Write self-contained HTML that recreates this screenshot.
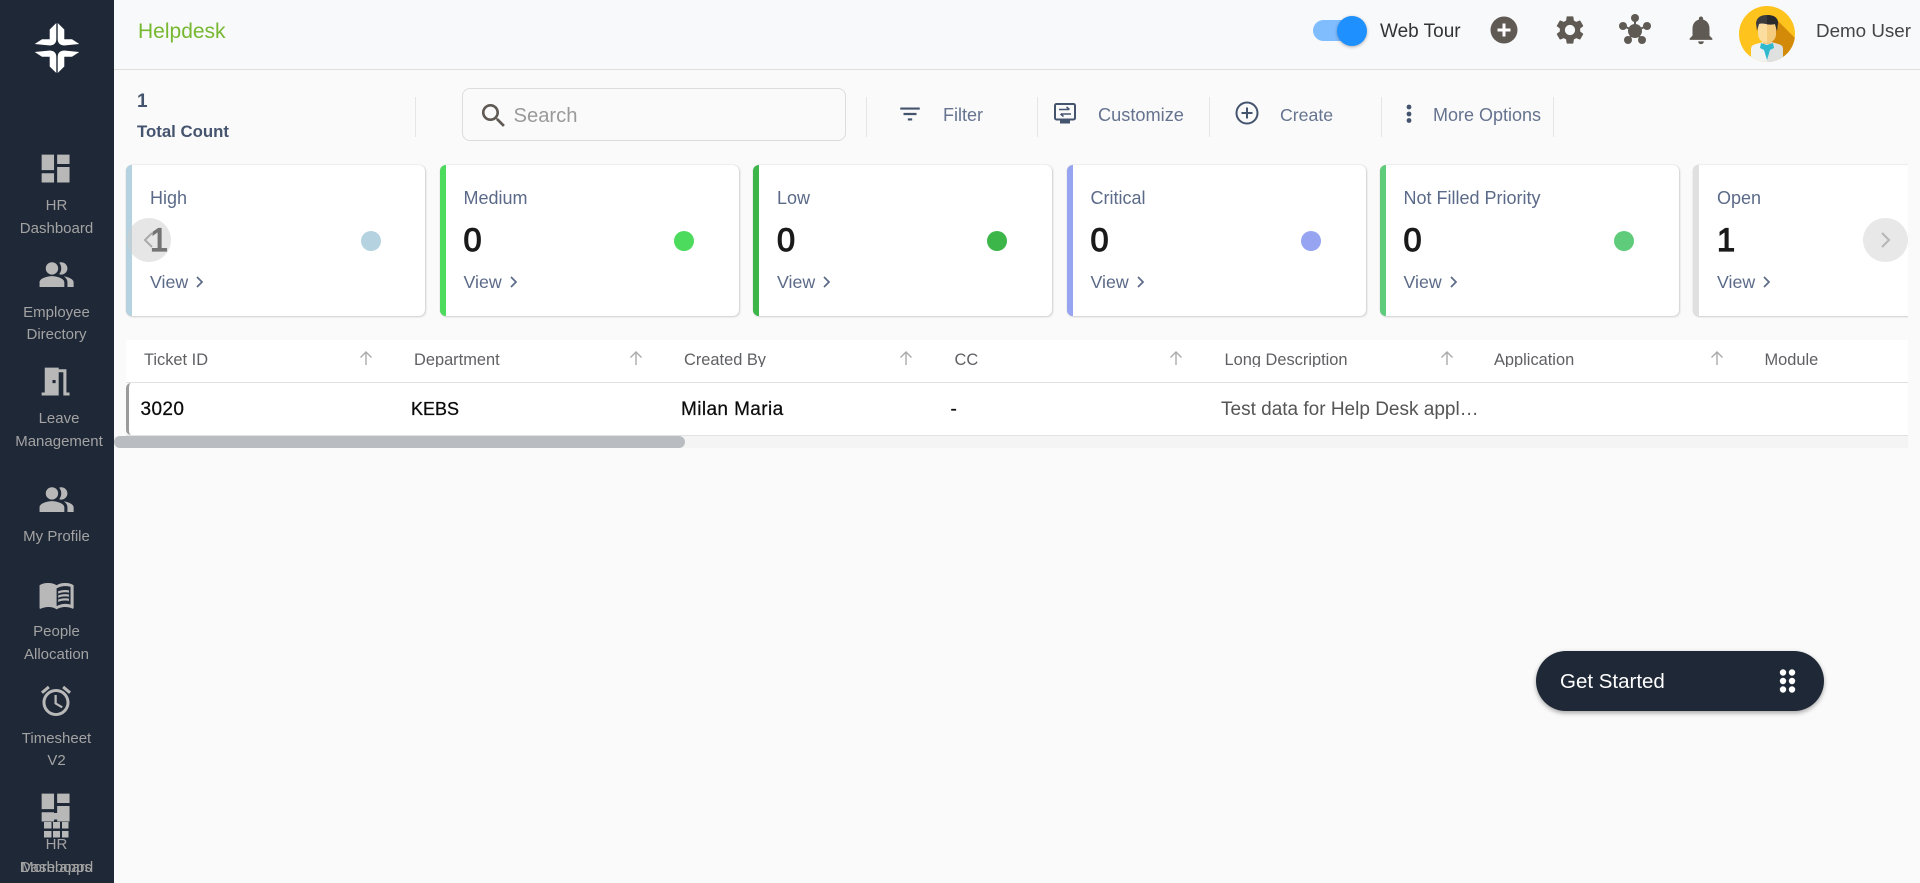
<!DOCTYPE html>
<html lang="en"><head><meta charset="utf-8"><title>Helpdesk</title>
<style>
html,body{margin:0;padding:0;width:1920px;height:883px;overflow:hidden;background:#fafafa;font-family:"Liberation Sans",sans-serif}
.a{position:absolute}
.t{position:absolute;line-height:0;white-space:nowrap}
.s{color:#a3a3a3;font-size:15px;transform:translateX(-50%)}
.tb{color:#65738f;font-size:18px;top:114.5px}
.dv{position:absolute;top:97px;width:1px;height:40px;background:#e6e6e6}
.card{position:absolute;top:9.5px;width:299px;height:151.5px;box-sizing:border-box;background:#fff;border-radius:6px;border-left:6px solid;box-shadow:0 0 1px rgba(0,0,0,.25),1px 1px 2px rgba(0,0,0,.14);overflow:hidden}
.card .l{position:absolute;left:18px;top:33.5px;line-height:0;font-size:18px;color:#5b6a88;white-space:nowrap}
.card .n{position:absolute;left:18px;top:75.5px;line-height:0;font-size:32.5px;color:#1a1a1a;-webkit-text-stroke:1.2px #1a1a1a}
.card .v{position:absolute;left:18px;top:117.5px;line-height:0;font-size:17.8px;color:#5b6a88}
.card svg{position:absolute;left:63px;top:110.5px}
.card i{position:absolute;left:228px;top:66.5px;width:20px;height:20px;border-radius:50%}
.h{position:absolute;top:340px;height:26.5px;overflow:hidden;font-size:16.4px;color:#5f6063;white-space:nowrap;line-height:40px}
.ar{position:absolute;top:350px}
.r{font-size:19px;color:#0b0b0b;top:409.5px;-webkit-text-stroke:.25px #0b0b0b;letter-spacing:.4px}
</style></head><body>

<!-- main header -->
<div class="a" style="left:114px;top:0;width:1806px;height:69px;background:#f8f9fb;border-bottom:1px solid #dedede"></div>
<div class="t" style="left:138px;top:32px;font-size:21px;color:#76b82f">Helpdesk</div>

<div class="a" style="left:1313px;top:20px;width:42px;height:21px;border-radius:11px;background:#80bdff"></div>
<div class="a" style="left:1337px;top:16px;width:30px;height:30px;border-radius:50%;background:#1e90ff;box-shadow:0 1px 3px rgba(0,0,0,.3)"></div>
<div class="t" style="left:1380px;top:31.500px;font-size:19px;color:#333">Web Tour</div>

<svg class="a" style="left:1489.500px;top:16px" width="28" height="28" viewBox="0 0 28 28"><circle cx="14" cy="14" r="13.500" fill="#5f5a54"/><path d="M14 7.500v13M7.500 14h13" stroke="#fff" stroke-width="3"/></svg>
<svg class="a" style="left:1553px;top:13px" width="34" height="34" viewBox="0 0 24 24"><path fill="#5f5a54" d="M19.140 12.940c.04-.3.06-.61.06-.94 0-.32-.02-.64-.07-.94l2.030-1.580c.18-.14.23-.41.12-.61l-1.920-3.320c-.12-.22-.37-.29-.59-.22l-2.390.96c-.5-.38-1.030-.7-1.620-.94l-.36-2.540c-.04-.24-.24-.41-.48-.41h-3.840c-.24 0-.43.17-.47.41l-.36 2.540c-.59.24-1.130.57-1.620.94l-2.390-.96c-.22-.08-.47 0-.59.22L2.740 8.870c-.12.21-.08.47.12.61l2.030 1.580c-.05.3-.09.63-.09.94s.02.64.07.94l-2.030 1.580c-.18.14-.23.41-.12.61l1.920 3.320c.12.22.37.29.59.22l2.390-.96c.5.38 1.030.7 1.620.94l.36 2.540c.05.24.24.41.48.41h3.840c.24 0 .44-.17.47-.41l.36-2.540c.59-.24 1.130-.56 1.620-.94l2.390.96c.22.08.47 0 .59-.22l1.920-3.320c.12-.22.07-.47-.12-.61l-2.010-1.580zM12 15.600c-1.980 0-3.600-1.620-3.600-3.600s1.620-3.600 3.600-3.600 3.600 1.620 3.600 3.600-1.620 3.600-3.600 3.600z"/></svg>
<svg class="a" style="left:1617px;top:12px" width="36" height="36" viewBox="0 0 36 36" fill="#5f5a54" stroke="#5f5a54"><path d="M18 19V6M18 19L6 14M18 19l12-5M18 19l-7 9M18 19l7 9" stroke-width="2"/><circle cx="18" cy="19" r="7" stroke="none"/><circle cx="18" cy="6" r="4" stroke="none"/><circle cx="6" cy="14" r="4" stroke="none"/><circle cx="30" cy="14" r="4" stroke="none"/><circle cx="11" cy="28" r="4" stroke="none"/><circle cx="25" cy="28" r="4" stroke="none"/></svg>
<svg class="a" style="left:1684px;top:13px" width="34" height="34" viewBox="0 0 24 24"><path fill="#5f5a54" d="M12 22c1.100 0 2-.9 2-2h-4c0 1.100.89 2 2 2zm6-6v-5c0-3.070-1.640-5.640-4.500-6.320V4c0-.83-.67-1.500-1.500-1.500s-1.500.67-1.500 1.500v.68C7.630 5.360 6 7.920 6 11v5l-2 2v1h16v-1l-2-2z"/></svg>

<svg class="a" style="left:1739px;top:6px" width="56" height="56" viewBox="0 0 56 56">
<defs><clipPath id="c"><circle cx="28" cy="28" r="28"/></clipPath></defs>
<g clip-path="url(#c)"><rect width="56" height="56" fill="#fec31d"/>
<path d="M37 13L60 36V60H30V30z" fill="#d38a08"/>
<path d="M12 56V43q0-4 5-5l7-2h8l7 2q5 1 5 5v13z" fill="#f1f2f2"/><path d="M28 36h4l7 2q5 1 5 5v13H28z" fill="#dfe1e1"/>
<rect x="24" y="30" width="8" height="8" fill="#f1c27d"/>
<path d="M22 37l6 2 6-2 1 5-4 2 -3 10-3-10-4-2z" fill="#2fb9cf"/>
<path d="M19 17h18v10q0 9-9 10-9-1-9-10z" fill="#fbdda0"/><path d="M28 17h9v10q0 9-9 10z" fill="#f5cb7e"/>
<path d="M18 25l-1-8q1-8 11-8 10 0 11 7l-1 9-2-7q-4 1-9 0t-7 0z" fill="#3c3c3e"/><path d="M28 9q10 0 11 7l-1 9-2-7q-4 1-8 .4z" fill="#2a2a2c"/>
</g></svg>
<div class="t" style="left:1816px;top:31px;font-size:18.800px;color:#444">Demo User</div>

<!-- toolbar -->
<div class="t" style="left:137px;top:102px;font-size:19px;font-weight:700;color:#45546e">1</div>
<div class="t" style="left:137px;top:132px;font-size:16.800px;font-weight:700;color:#45546e">Total Count</div>
<div class="dv" style="left:414.500px"></div>
<div class="a" style="left:462px;top:88px;width:384px;height:53px;box-sizing:border-box;border:1px solid #dcdcdc;border-radius:8px"></div>
<svg class="a" style="left:478px;top:100px" width="31.500" height="31.500" viewBox="0 0 24 24"><path fill="#5f5a54" d="M15.500 14h-.79l-.28-.27C15.410 12.590 16 11.110 16 9.500 16 5.910 13.090 3 9.500 3S3 5.910 3 9.500 5.910 16 9.500 16c1.610 0 3.090-.59 4.230-1.570l.27.28v.79l5 4.990L20.490 19l-4.990-5zm-6 0C7.010 14 5 11.990 5 9.500S7.010 5 9.500 5 14 7.010 14 9.500 11.990 14 9.500 14z"/></svg>
<div class="t" style="left:513.500px;top:115.500px;font-size:20.200px;color:#9a9a9a">Search</div>
<div class="dv" style="left:866px"></div>

<svg class="a" style="left:897px;top:101px" width="26" height="26" viewBox="0 0 24 24"><path fill="#45546e" d="M10 18h4v-2h-4v2zM3 6v2h18V6H3zm3 7h12v-2H6v2z"/></svg>
<div class="t tb" style="left:943px">Filter</div>
<div class="dv" style="left:1037px"></div>
<svg class="a" style="left:1054px;top:103px" width="22" height="21" viewBox="0 0 22 21"><rect x="1" y="1" width="20" height="15.500" rx="1.500" fill="none" stroke="#45546e" stroke-width="2"/><rect x="6" y="16.500" width="10" height="4" fill="#45546e"/><path d="M5 6.500h10M12.500 4l3 2.500M17 11H7M9.500 13.500l-3-2.500" stroke="#45546e" stroke-width="1.500" fill="none"/></svg>
<div class="t tb" style="left:1098px;font-size:18.200px">Customize</div>
<div class="dv" style="left:1209px"></div>
<svg class="a" style="left:1235px;top:101px" width="24" height="24" viewBox="0 0 24 24"><circle cx="12" cy="12" r="10.500" fill="none" stroke="#45546e" stroke-width="2"/><path d="M12 6.500v11M6.500 12h11" stroke="#45546e" stroke-width="2"/></svg>
<div class="t tb" style="left:1280px;font-size:17.700px">Create</div>
<div class="dv" style="left:1381px"></div>
<svg class="a" style="left:1405px;top:103px" width="8" height="22" viewBox="0 0 8 22" fill="#45546e"><circle cx="4" cy="4" r="2.400"/><circle cx="4" cy="11" r="2.400"/><circle cx="4" cy="17.500" r="2.400"/></svg>
<div class="t tb" style="left:1433px">More Options</div>
<div class="dv" style="left:1553px"></div>

<!-- cards -->
<div class="a" style="left:120px;top:155px;width:1788px;height:170px;overflow:hidden">
<div class="card" style="left:6px;border-color:#b5d2e0"><div class="l">High</div><div class="n">1</div><div class="v">View</div><svg width="10" height="14" viewBox="0 0 10 14"><path d="M2 2l5 5-5 5" fill="none" stroke="#5b6a88" stroke-width="1.700"/></svg><i style="background:#b5d2e0;left:228.500px"></i></div>
<div class="card" style="left:319.500px;border-color:#4cdb5d"><div class="l">Medium</div><div class="n">0</div><div class="v">View</div><svg width="10" height="14" viewBox="0 0 10 14"><path d="M2 2l5 5-5 5" fill="none" stroke="#5b6a88" stroke-width="1.700"/></svg><i style="background:#4cdb5d"></i></div>
<div class="card" style="left:633px;border-color:#3cb549"><div class="l">Low</div><div class="n">0</div><div class="v">View</div><svg width="10" height="14" viewBox="0 0 10 14"><path d="M2 2l5 5-5 5" fill="none" stroke="#5b6a88" stroke-width="1.700"/></svg><i style="background:#3cb549"></i></div>
<div class="card" style="left:946.500px;border-color:#97a4f1"><div class="l">Critical</div><div class="n">0</div><div class="v">View</div><svg width="10" height="14" viewBox="0 0 10 14"><path d="M2 2l5 5-5 5" fill="none" stroke="#5b6a88" stroke-width="1.700"/></svg><i style="background:#97a4f1"></i></div>
<div class="card" style="left:1259.500px;border-color:#5fcc7b"><div class="l">Not Filled Priority</div><div class="n">0</div><div class="v">View</div><svg width="10" height="14" viewBox="0 0 10 14"><path d="M2 2l5 5-5 5" fill="none" stroke="#5b6a88" stroke-width="1.700"/></svg><i style="background:#5fcc7b"></i></div>
<div class="card" style="left:1573px;border-color:#e0e0e0"><div class="l">Open</div><div class="n">1</div><div class="v">View</div><svg width="10" height="14" viewBox="0 0 10 14"><path d="M2 2l5 5-5 5" fill="none" stroke="#5b6a88" stroke-width="1.700"/></svg></div>
</div>
<div class="a" style="left:126.500px;top:218px;width:44px;height:44px;border-radius:50%;background:rgba(205,205,205,.5)"></div>
<svg class="a" style="left:142px;top:231px" width="12" height="18" viewBox="0 0 12 18"><path d="M10 2L3 9l7 7" fill="none" stroke="#aaa" stroke-width="2"/></svg>
<div class="a" style="left:1863px;top:218px;width:45px;height:44px;border-radius:50%;background:#e8e8e8"></div>
<svg class="a" style="left:1880px;top:231px" width="12" height="18" viewBox="0 0 12 18"><path d="M2 2l7 7-7 7" fill="none" stroke="#b5b5b5" stroke-width="2"/></svg>

<!-- table -->
<div class="a" style="left:126px;top:340px;width:1782px;height:42px;background:#fff;border-bottom:1px solid #e0e0e0"></div>
<div class="a" style="left:126px;top:383px;width:1782px;height:52px;box-sizing:border-box;background:#fff;border-left:3.500px solid #9a9a9a;border-radius:5px 0 0 5px"></div>
<div class="a" style="left:126px;top:435px;width:1782px;height:1px;background:#e2e2e2"></div>
<div class="h" style="left:144px">Ticket ID</div>
<div class="h" style="left:414px">Department</div>
<div class="h" style="left:684px">Created By</div>
<div class="h" style="left:954.500px">CC</div>
<div class="h" style="left:1224.500px">Long Description</div>
<div class="h" style="left:1494px">Application</div>
<div class="h" style="left:1764.500px">Module</div>
<svg class="ar" style="left:359px" width="14" height="16" viewBox="0 0 14 16"><path d="M7 15V2M1.500 7.500L7 2l5.500 5.500" fill="none" stroke="#aaa" stroke-width="1.400"/></svg>
<svg class="ar" style="left:629px" width="14" height="16" viewBox="0 0 14 16"><path d="M7 15V2M1.500 7.500L7 2l5.500 5.500" fill="none" stroke="#aaa" stroke-width="1.400"/></svg>
<svg class="ar" style="left:899px" width="14" height="16" viewBox="0 0 14 16"><path d="M7 15V2M1.500 7.500L7 2l5.500 5.500" fill="none" stroke="#aaa" stroke-width="1.400"/></svg>
<svg class="ar" style="left:1169px" width="14" height="16" viewBox="0 0 14 16"><path d="M7 15V2M1.500 7.500L7 2l5.500 5.500" fill="none" stroke="#aaa" stroke-width="1.400"/></svg>
<svg class="ar" style="left:1439.500px" width="14" height="16" viewBox="0 0 14 16"><path d="M7 15V2M1.500 7.500L7 2l5.500 5.500" fill="none" stroke="#aaa" stroke-width="1.400"/></svg>
<svg class="ar" style="left:1709.500px" width="14" height="16" viewBox="0 0 14 16"><path d="M7 15V2M1.500 7.500L7 2l5.500 5.500" fill="none" stroke="#aaa" stroke-width="1.400"/></svg>
<div class="t r" style="left:140.500px">3020</div>
<div class="t r" style="left:411px;font-size:18px;top:409px;letter-spacing:0">KEBS</div>
<div class="t r" style="left:681px">Milan Maria</div>
<div class="t r" style="left:950.500px">-</div>
<div class="t" style="left:1221px;top:409.500px;font-size:19px;color:#555">Test data for Help Desk appl…</div>
<div class="a" style="left:114px;top:436px;width:1794px;height:12px;background:#f4f4f4"></div>
<div class="a" style="left:114px;top:436px;width:571px;height:12px;border-radius:6px;background:#b9bdc1"></div>

<!-- get started -->
<div class="a" style="left:1536px;top:651px;width:288px;height:60px;border-radius:30px;background:#1f2836;box-shadow:0 2px 5px rgba(0,0,0,.35)"></div>
<div class="t" style="left:1560px;top:681.500px;font-size:20.500px;color:#fff">Get Started</div>
<svg class="a" style="left:1778px;top:668px" width="20" height="26" viewBox="0 0 20 26" fill="#fff"><circle cx="5" cy="4.500" r="3.200"/><circle cx="14" cy="4.500" r="3.200"/><circle cx="5" cy="13" r="3.200"/><circle cx="14" cy="13" r="3.200"/><circle cx="5" cy="21.500" r="3.200"/><circle cx="14" cy="21.500" r="3.200"/></svg>

<!-- sidebar -->
<div class="a" style="left:0;top:0;width:114px;height:883px;background:#1f2836"></div>
<svg class="a" style="left:27px;top:18px" width="60" height="60" viewBox="-30 -30 60 60" fill="#fff">
<defs><path id="q" d="M-.7-25L-7.300-18.500V-8.700H-15L-22.300-4-7-2.500Q-.7-3-.7-9z"/></defs>
<use href="#q"/><use href="#q" transform="scale(-1,1)"/><use href="#q" transform="scale(1,-1)"/><use href="#q" transform="scale(-1,-1)"/>
</svg>

<svg class="a" style="left:37.300px;top:150.300px" width="37.200" height="37.200" viewBox="0 0 24 24" fill="#b8b8b8"><path d="M3 13h8V3H3v10zm0 8h8v-6H3v6zm10 0h8V11h-8v10zm0-18v6h8V3h-8z"/></svg>
<div class="t s" style="left:56.500px;top:206px">HR</div>
<div class="t s" style="left:56.500px;top:229px">Dashboard</div>

<svg class="a" style="left:37.500px;top:256px" width="37.200" height="37.200" viewBox="0 0 24 24" fill="#b8b8b8"><path d="M16.670 13.130C18.040 14.060 19 15.320 19 17v3h4v-3c0-2.180-3.570-3.470-6.330-3.870z"/><circle cx="9" cy="8" r="4"/><path d="M15 12c2.210 0 4-1.790 4-4s-1.790-4-4-4c-.47 0-.91.1-1.330.24C14.500 5.270 15 6.580 15 8s-.5 2.730-1.330 3.760c.42.14.86.24 1.330.24zM9 13c-2.670 0-8 1.340-8 4v3h16v-3c0-2.660-5.330-4-8-4z"/></svg>
<div class="t s" style="left:56.500px;top:312.500px">Employee</div>
<div class="t s" style="left:56.500px;top:334.500px">Directory</div>

<svg class="a" style="left:37.300px;top:363.300px" width="37.200" height="37.200" viewBox="0 0 24 24" fill="#b8b8b8"><path d="M14 6v15H3v-2h2V3h9v1h5v15h2v2h-4V6h-3zm-4 5v2h2v-2h-2z"/></svg>
<div class="t s" style="left:59px;top:419px">Leave</div>
<div class="t s" style="left:59px;top:442px">Management</div>

<svg class="a" style="left:37.500px;top:481px" width="37.200" height="37.200" viewBox="0 0 24 24" fill="#b8b8b8"><path d="M16.670 13.130C18.040 14.060 19 15.320 19 17v3h4v-3c0-2.180-3.570-3.470-6.330-3.870z"/><circle cx="9" cy="8" r="4"/><path d="M15 12c2.210 0 4-1.790 4-4s-1.790-4-4-4c-.47 0-.91.1-1.330.24C14.500 5.270 15 6.580 15 8s-.5 2.730-1.330 3.760c.42.14.86.24 1.330.24zM9 13c-2.670 0-8 1.340-8 4v3h16v-3c0-2.660-5.330-4-8-4z"/></svg>
<div class="t s" style="left:56.500px;top:536.500px">My Profile</div>

<svg class="a" style="left:37.500px;top:576px" width="37.200" height="37.200" viewBox="0 0 24 24" fill="#b8b8b8"><path d="M21 5c-1.110-.35-2.330-.5-3.500-.5-1.950 0-4.050.4-5.500 1.500-1.450-1.100-3.550-1.500-5.500-1.500S2.450 4.900 1 6v14.650c0 .25.25.5.5.5.1 0 .15-.05.25-.05C3.100 20.450 5.050 20 6.500 20c1.950 0 4.050.4 5.500 1.500 1.350-.85 3.800-1.500 5.500-1.500 1.650 0 3.350.3 4.750 1.050.1.05.15.05.25.05.25 0 .5-.25.5-.5V6c-.6-.45-1.250-.75-2-1zm0 13.500c-1.100-.35-2.300-.5-3.500-.5-1.700 0-4.150.65-5.500 1.500V8c1.350-.85 3.800-1.500 5.500-1.500 1.200 0 2.400.15 3.500.5v11.500z"/><path d="M17.500 10.500c.88 0 1.730.09 2.500.26V9.240c-.79-.15-1.640-.24-2.500-.24-1.700 0-3.240.29-4.500.83v1.660c1.130-.64 2.700-.99 4.500-.99zM13 12.490v1.660c1.130-.64 2.700-.99 4.500-.99.88 0 1.730.09 2.500.26V11.900c-.79-.15-1.640-.24-2.500-.24-1.700 0-3.240.3-4.500.83zM17.500 14.330c-1.700 0-3.240.29-4.500.83v1.660c1.130-.64 2.700-.99 4.500-.99.88 0 1.730.09 2.500.26v-1.520c-.79-.16-1.640-.24-2.500-.24z"/></svg>
<div class="t s" style="left:56.500px;top:631.500px">People</div>
<div class="t s" style="left:56.500px;top:654.500px">Allocation</div>

<svg class="a" style="left:38px;top:683px" width="36" height="36" viewBox="0 0 24 24" fill="#b8b8b8"><path d="M22 5.720l-4.600-3.860-1.290 1.530 4.600 3.860L22 5.720zM7.880 3.390L6.600 1.860 2 5.710l1.290 1.530 4.590-3.850zM12.500 8H11v6l4.750 2.850.75-1.230-4-2.370V8zM12 4c-4.970 0-9 4.030-9 9s4.030 9 9 9c4.970 0 9-4.030 9-9s-4.030-9-9-9zm0 16c-3.870 0-7-3.130-7-7s3.130-7 7-7 7 3.130 7 7-3.130 7-7 7z"/></svg>
<div class="t s" style="left:56.500px;top:738.500px">Timesheet</div>
<div class="t s" style="left:56.500px;top:760.500px">V2</div>

<svg class="a" style="left:44px;top:813px" width="25" height="25" viewBox="0 0 25 25" fill="#b8b8b8"><path d="M0 0h7.500v6.500H0zM9 0h7v6.500H9zM18 0h6.500v6.500H18zM0 9h7.500v6.500H0zM9 9h7v6.500H9zM18 9h6.500v6.500H18zM0 18h7.500v6.500H0zM9 18h7v6.500H9zM18 18h6.500v6.500H18z"/></svg>
<svg class="a" style="left:37.300px;top:789.400px" width="37.200" height="37.200" viewBox="0 0 24 24" fill="#b8b8b8"><path d="M3 13h8V3H3v10zm0 8h8v-6H3v6zm10 0h8V11h-8v10zm0-18v6h8V3h-8z"/></svg>
<div class="t s" style="left:56.500px;top:845px">HR</div>
<div class="t s" style="left:56.500px;top:867.500px">Dashboard</div>
<div class="t s" style="left:56.500px;top:867.500px">More apps</div>

</body></html>
